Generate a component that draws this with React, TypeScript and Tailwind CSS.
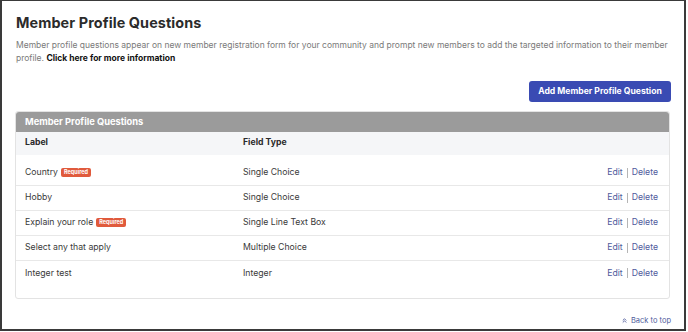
import React from "react";

const rows = [
  { label: "Country", required: true, type: "Single Choice" },
  { label: "Hobby", required: false, type: "Single Choice" },
  { label: "Explain your role", required: true, type: "Single Line Text Box" },
  { label: "Select any that apply", required: false, type: "Multiple Choice" },
  { label: "Integer test", required: false, type: "Integer" },
];

export default function App() {
  return (
    <div
      className="w-[688px] h-[332px] bg-white"
      style={{ fontFamily: "Inter, 'Liberation Sans', sans-serif" }}
    >
      <div className="w-[686px] h-[331px] border-2 border-t-[1.5px] border-[#3a3a3a] bg-white flex flex-col px-[13px] pt-[12px]">
        <h1 className="text-[14.4px] leading-[20px] font-bold text-[#2b2b2b] pl-[1px] tracking-[0.1px]">
          Member Profile Questions
        </h1>
        <p className="mt-[6px] text-[8.5px] leading-[12.5px] text-[#7a7a7a] pl-[1px]">
          Member profile questions appear on new member registration form for your community and prompt new members to add the targeted information to their member profile.{" "}
          <span className="font-bold text-[#111]">Click here for more information</span>
        </p>
        <div className="flex justify-end mt-[16.5px]">
          <button className="h-[21px] w-[142px] rounded-[3px] bg-[#3a4bb3] text-white text-[8.6px] font-bold">
            Add Member Profile Question
          </button>
        </div>
        <div className="mt-[9px] w-[655px] h-[188px] border border-[#e3e3e3] rounded-[3px] flex flex-col">
          <div className="h-[20px] bg-[#9b9b9b] rounded-t-[3px] flex items-center px-[9px] text-white font-bold text-[9.3px]">
            Member Profile Questions
          </div>
          <div className="h-[23px] bg-[#f5f6f8] flex items-center px-[9px] text-[8.7px] font-bold text-[#2b2b2b]">
            <div className="w-[218px]">Label</div>
            <div>Field Type</div>
          </div>
          <div className="pt-[6px]">
            {rows.map((r, i) => (
              <div
                key={r.label}
                className={`h-[25px] flex items-center px-[9px] pt-[1px] text-[8.7px] text-[#3a3a3a] ${i < rows.length - 1 ? "border-b border-[#e8e8e8]" : ""}`}
              >
                <div className="w-[218px] flex items-center gap-[3px]">
                  <span>{r.label}</span>
                  {r.required && (
                    <span className="h-[9px] px-[3px] rounded-[2px] bg-[#e05a3c] text-white text-[5.5px] font-bold leading-[9px]">
                      Required
                    </span>
                  )}
                </div>
                <div className="flex-1">{r.type}</div>
                <div className="flex items-center text-[#4f5b9c] pr-[2px]">
                  <span>Edit</span>
                  <span className="mx-[4px] w-[1px] h-[10px] bg-[#b5b5b5]" />
                  <span>Delete</span>
                </div>
              </div>
            ))}
          </div>
        </div>
        <div className="flex justify-end mt-[16px]">
          <div className="flex items-center gap-[3px] text-[7.5px] text-[#4f5b9c]">
            <svg width="7" height="7" viewBox="0 0 24 24" fill="none" stroke="#4f5b9c" strokeWidth="3" strokeLinecap="round" strokeLinejoin="round">
              <path d="m17 11-5-5-5 5" />
              <path d="m17 18-5-5-5 5" />
            </svg>
            <span>Back to top</span>
          </div>
        </div>
      </div>
    </div>
  );
}
